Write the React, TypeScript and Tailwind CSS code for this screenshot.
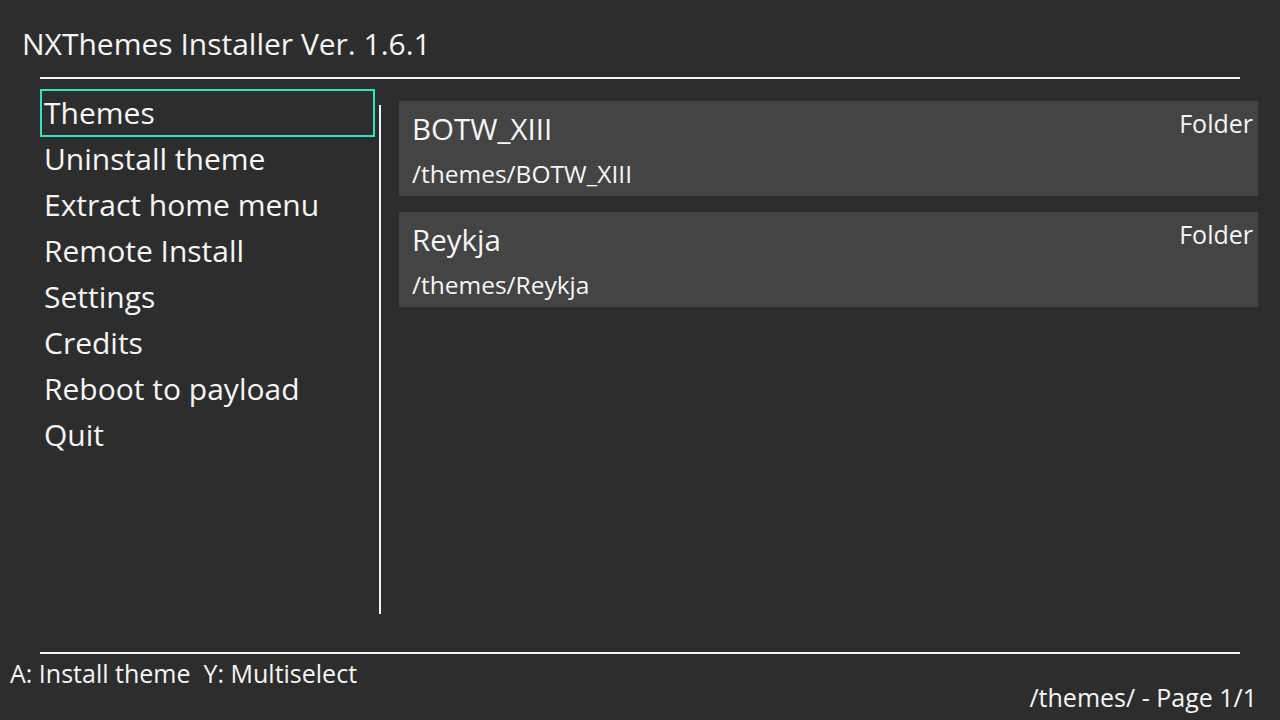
const menu = [
  "Themes",
  "Uninstall theme",
  "Extract home menu",
  "Remote Install",
  "Settings",
  "Credits",
  "Reboot to payload",
  "Quit",
];

const themes = [
  { name: "BOTW_XIII", path: "/themes/BOTW_XIII" },
  { name: "Reykja", path: "/themes/Reykja" },
];

export default function App() {
  return (
    <div className="w-[1280px] h-[720px] bg-[#2d2d2d] text-[#f5f5f5] font-['Open_Sans',sans-serif] flex flex-col overflow-hidden">
      <div className="pl-[22px] pt-[24px] text-[30px] leading-[40px]">NXThemes Installer Ver. 1.6.1</div>
      <div className="mx-[40px] mt-[13px] h-[2px] bg-[#f5f5f5]" />

      <div className="flex h-[573px]">
        <nav className="ml-[41px] mt-[11px] w-[333px] flex flex-col">
          {menu.map((item, i) => (
            <div
              key={item}
              className={
                "h-[46px] pl-[3px] text-[30px] leading-[46px] " +
                (i === 0 ? "outline-2 outline-offset-[-1px] outline-[#34e2bf]" : "")
              }
            >
              {item}
            </div>
          ))}
        </nav>

        <div className="ml-[5px] mt-[26px] w-[2px] h-[509px] bg-[#f5f5f5]" />

        <div className="ml-[18px] mt-[22px] w-[859px] flex flex-col gap-[16px]">
          {themes.map((t) => (
            <div key={t.name} className="h-[95px] bg-[#444444] pl-[13px] pr-[5px] flex justify-between">
              <div>
                <div className="mt-[9px] text-[29.5px] leading-[38px]">{t.name}</div>
                <div className="mt-[11px] text-[24.5px] leading-[30px]">{t.path}</div>
              </div>
              <div className="mt-[6px] text-[25px] leading-[32px]">Folder</div>
            </div>
          ))}
        </div>
      </div>

      <div className="mx-[40px] h-[2px] bg-[#f5f5f5]" />
      <div className="pl-[10px] mt-[3px] text-[25px] leading-[32px] whitespace-pre">A: Install theme  Y: Multiselect</div>
      <div className="self-end pr-[23px] mt-[-8px] text-[25px] leading-[32px]">/themes/ - Page 1/1</div>
    </div>
  );
}
